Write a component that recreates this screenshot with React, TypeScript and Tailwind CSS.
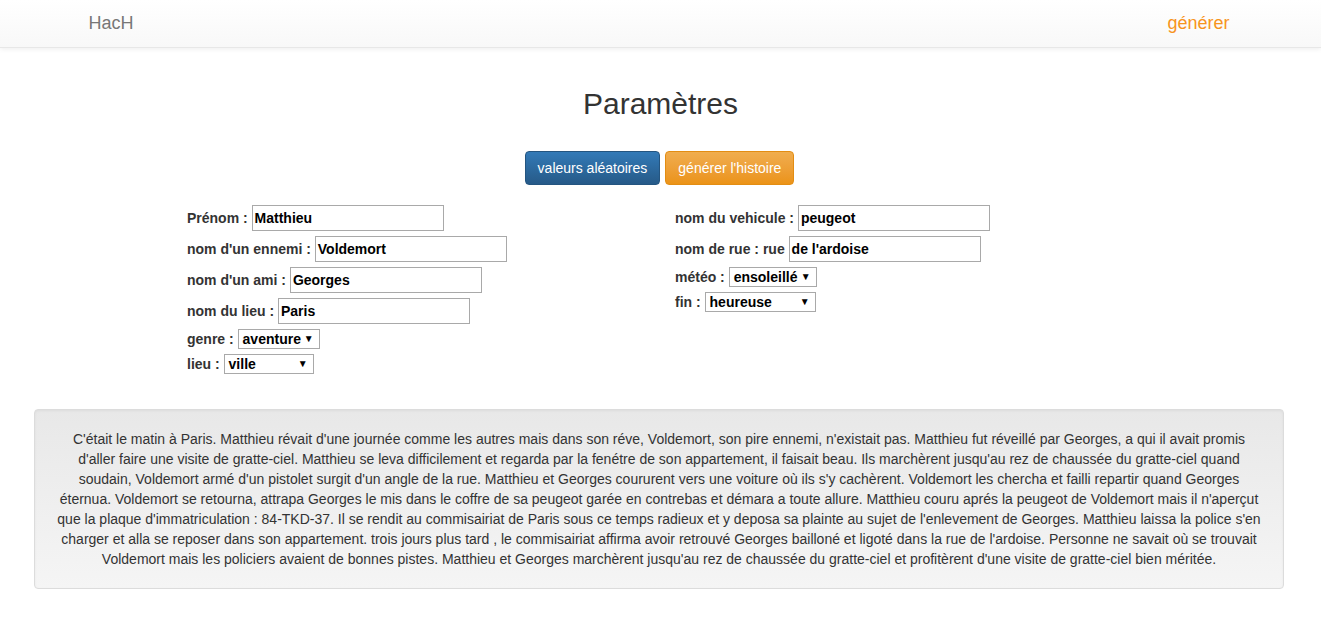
const font = { fontFamily: '"Liberation Sans", Arial, Helvetica, sans-serif' };

function TextField({ label, value }: { label: string; value: string }) {
  return (
    <div className="mb-[5px] flex h-[26px] items-center">
      <span className="font-bold text-[#333]">{label}&nbsp;</span>
      <div className="flex h-[26px] w-[192px] items-center border border-[#a9a9a9] bg-white px-[2px] font-bold text-black">
        {value}
      </div>
    </div>
  );
}

function SelectField({ label, value, width }: { label: string; value: string; width: string }) {
  return (
    <div className="mb-[5px] flex h-[20px] items-center">
      <span className="font-bold text-[#333]">{label}&nbsp;</span>
      <div
        className={`flex h-[20px] items-center justify-between border border-[#a9a9a9] bg-white pl-[4px] pr-[5px] font-bold text-black ${width}`}
      >
        <span>{value}</span>
        <span className="text-[10px] leading-none">▼</span>
      </div>
    </div>
  );
}

const lines = [
  "C'était le matin à Paris. Matthieu révait d'une journée comme les autres mais dans son réve, Voldemort, son pire ennemi, n'existait pas. Matthieu fut réveillé par Georges, a qui il avait promis",
  "d'aller faire une visite de gratte-ciel. Matthieu se leva difficilement et regarda par la fenétre de son appartement, il faisait beau. Ils marchèrent jusqu'au rez de chaussée du gratte-ciel quand",
  "soudain, Voldemort armé d'un pistolet surgit d'un angle de la rue. Matthieu et Georges coururent vers une voiture où ils s'y cachèrent. Voldemort les chercha et failli repartir quand Georges",
  "éternua. Voldemort se retourna, attrapa Georges le mis dans le coffre de sa peugeot garée en contrebas et démara a toute allure. Matthieu couru aprés la peugeot de Voldemort mais il n'aperçut",
  "que la plaque d'immatriculation : 84-TKD-37. Il se rendit au commisairiat de Paris sous ce temps radieux et y deposa sa plainte au sujet de l'enlevement de Georges. Matthieu laissa la police s'en",
  "charger et alla se reposer dans son appartement. trois jours plus tard , le commisairiat affirma avoir retrouvé Georges bailloné et ligoté dans la rue de l'ardoise. Personne ne savait où se trouvait",
  "Voldemort mais les policiers avaient de bonnes pistes. Matthieu et Georges marchèrent jusqu'au rez de chaussée du gratte-ciel et profitèrent d'une visite de gratte-ciel bien méritée.",
];

export default function App() {
  return (
    <div className="min-h-[632px] bg-white text-[14px] leading-[20px] text-[#333]" style={font}>
      <nav className="h-[48px] border-b border-[#e7e7e7] bg-gradient-to-b from-white to-[#f8f8f8] shadow-[0_1px_5px_rgba(0,0,0,0.075)]">
        <div className="mx-auto flex h-full w-[1170px] items-center justify-between pb-[2px] pl-[13px] pr-[16px]">
          <span className="text-[18px] text-[#777]">HacH</span>
          <span className="text-[18px] text-[#f7941d]">générer</span>
        </div>
      </nav>

      <h2 className="mt-[39px] text-center text-[30px] leading-[33px] text-[#333]">Paramètres</h2>

      <div className="mt-[31px] flex justify-center gap-[5px] pr-[2px]">
        <button className="h-[34px] rounded-[4px] border border-[#245580] bg-gradient-to-b from-[#337ab7] to-[#265a88] px-[12px] text-white">
          valeurs aléatoires
        </button>
        <button className="h-[34px] rounded-[4px] border border-[#e38d13] bg-gradient-to-b from-[#f0ad4e] to-[#eb9316] px-[12px] text-white">
          générer l'histoire
        </button>
      </div>

      <div className="mt-[20px] flex pl-[187px]">
        <div className="w-[488px]">
          <TextField label="Prénom :" value="Matthieu" />
          <TextField label="nom d'un ennemi :" value="Voldemort" />
          <TextField label="nom d'un ami :" value="Georges" />
          <TextField label="nom du lieu :" value="Paris" />
          <SelectField label="genre :" value="aventure" width="w-[82px]" />
          <SelectField label="lieu :" value="ville" width="w-[90px]" />
        </div>
        <div>
          <TextField label="nom du vehicule :" value="peugeot" />
          <TextField label="nom de rue : rue" value="de l'ardoise" />
          <SelectField label="météo :" value="ensoleillé" width="w-[88px]" />
          <SelectField label="fin :" value="heureuse" width="w-[111px]" />
        </div>
      </div>

      <div className="ml-[34px] mr-[37px] mt-[30px] rounded-[4px] border border-[#dcdcdc] bg-gradient-to-b from-[#e8e8e8] to-[#f5f5f5] p-[19px] text-center text-[#333] shadow-[inset_0_1px_3px_rgba(0,0,0,0.05)]">
        {lines.map((l, i) => (
          <div key={i} className="whitespace-nowrap">
            {l}
          </div>
        ))}
      </div>
    </div>
  );
}
